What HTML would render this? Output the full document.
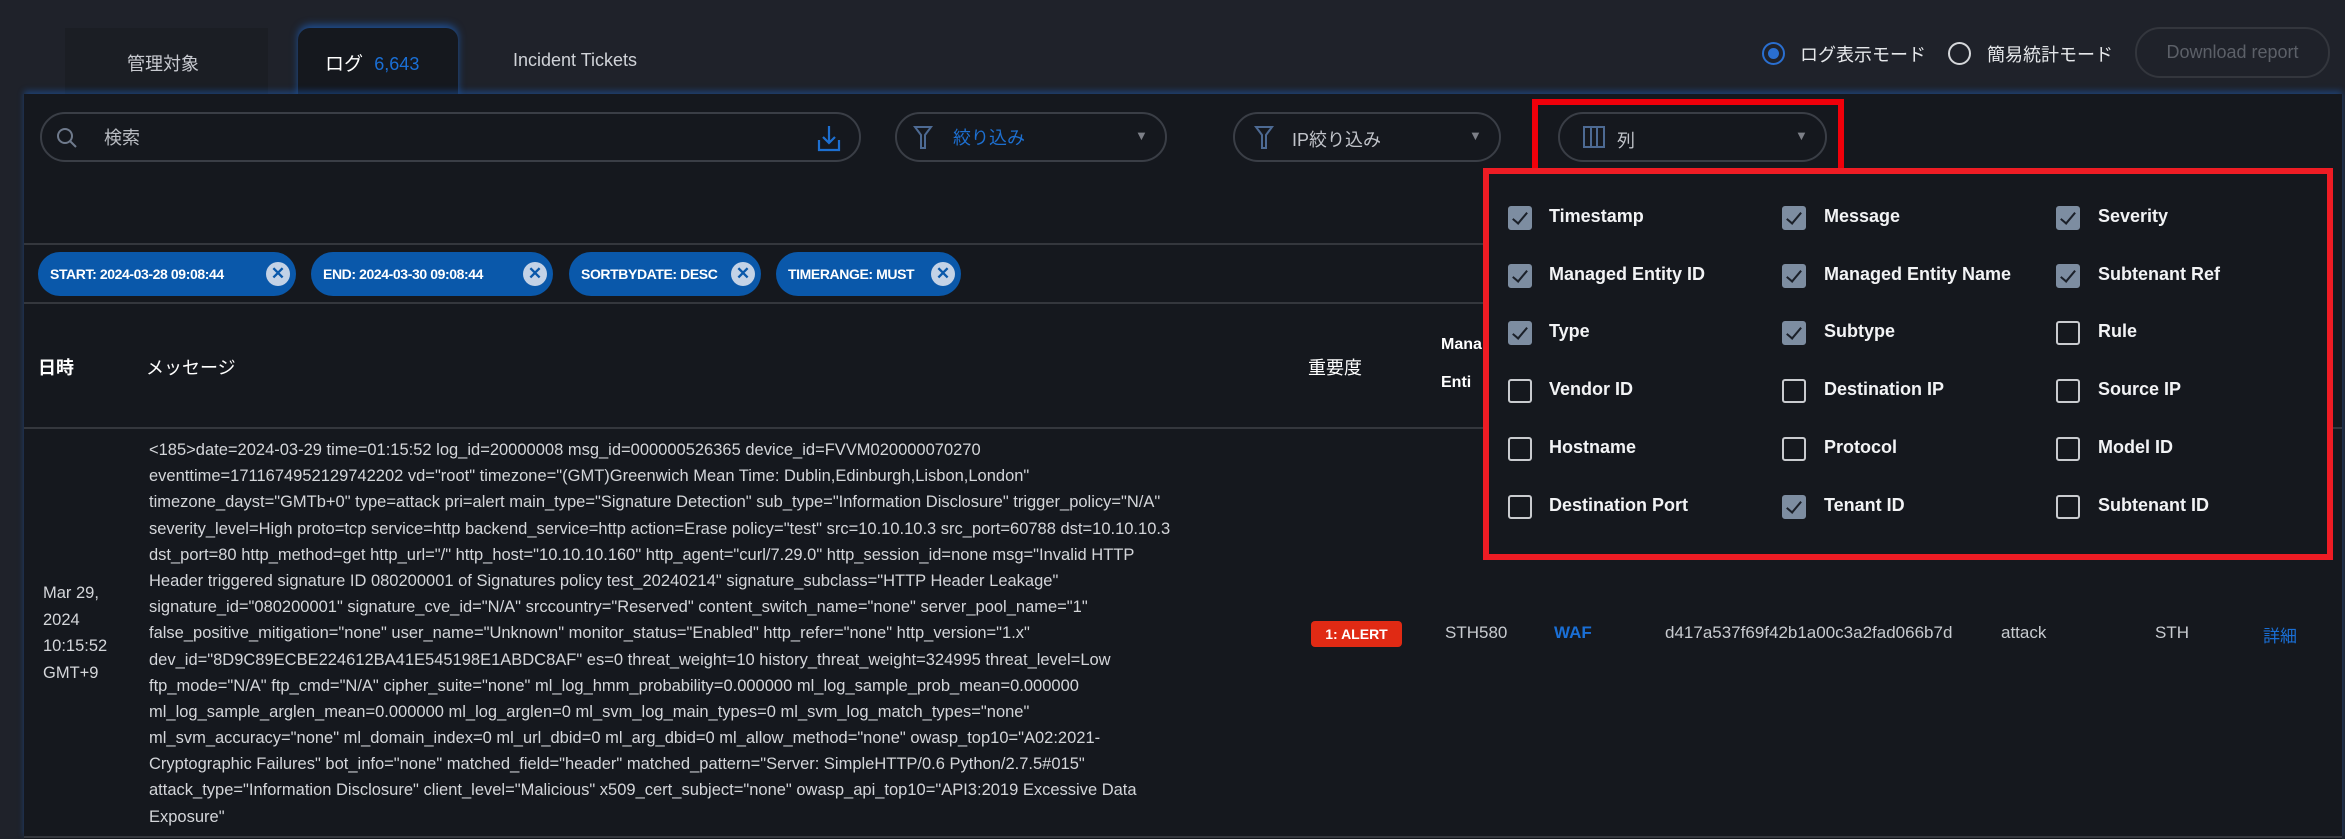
<!DOCTYPE html>
<html><head><meta charset="utf-8"><style>
*{margin:0;padding:0;box-sizing:border-box}
body{width:2345px;height:839px;background:#1f222a;font-family:"Liberation Sans","Noto Sans CJK JP",sans-serif;color:#d0d3d8;position:relative;overflow:hidden}
.a{position:absolute;white-space:nowrap}
.panel{position:absolute;left:24px;top:94px;width:2318px;height:745px;background:#15181e;box-shadow:0 -3px 6px rgba(30,110,220,.4)}
.box{position:absolute;border:2px solid #3a3e46;border-radius:26px;height:50px;top:112px}
.chip{position:absolute;top:252px;height:44px;border-radius:22px;background:#0a58aa;color:#fff;font-weight:bold;font-size:14px;letter-spacing:-0.4px;line-height:44px;padding-left:12px}
.chip i{position:absolute;right:6px;top:10px;width:24px;height:24px;border-radius:12px;background:#c3d2e6;color:#0a58aa;font-style:normal;text-align:center;line-height:24px;font-size:17px;letter-spacing:0}
.cb{position:absolute;width:24px;height:24px;border-radius:3px;border:2px solid #c9cbcf}
.cb.on{background:#7d8da1;border-color:#7d8da1}
.cb.on:after{content:"";position:absolute;left:6px;top:1px;width:6px;height:13px;border:solid #1b2029;border-width:0 2px 2px 0;transform:rotate(40deg)}
.lb{position:absolute;font-size:18px;font-weight:600;color:#f2f3f5;white-space:nowrap}
.msg div{height:26.2px;line-height:26.2px;font-size:16.5px;color:#d4d6da;white-space:nowrap}
</style></head><body>
<div class="a" style="left:65px;top:28px;width:203px;height:66px;background:#1b1e24"></div>
<div class="a" style="left:127px;top:50px;font-size:18px;color:#c8cad0">管理対象</div>
<div class="a" style="left:298px;top:28px;width:160px;height:70px;background:#15181e;border-radius:12px 12px 0 0;box-shadow:0 -3px 8px rgba(30,110,220,.6)"></div>
<div class="a" style="left:325px;top:49px;font-size:19px;color:#fff">ログ <span style="color:#1a6fd6;font-size:18px;margin-left:6px">6,643</span></div>
<div class="a" style="left:513px;top:50px;font-size:18px;color:#d0d3d8">Incident Tickets</div>
<div class="a" style="left:1762px;top:42px;width:23px;height:23px;border:2px solid #2a6fd0;border-radius:50%"><div style="margin:4px;width:11px;height:11px;border-radius:50%;background:#2a6fd0"></div></div>
<div class="a" style="left:1800px;top:41px;font-size:18px;color:#e6e8eb">ログ表示モード</div>
<div class="a" style="left:1948px;top:42px;width:23px;height:23px;border:2px solid #d5d7da;border-radius:50%"></div>
<div class="a" style="left:1987px;top:41px;font-size:18px;color:#e6e8eb">簡易統計モード</div>
<div class="a" style="left:2135px;top:27px;width:195px;height:51px;border:2px solid #33363d;border-radius:25px;color:#5c6068;font-size:18px;text-align:center;line-height:47px">Download report</div>
<div class="panel"></div>
<div class="box" style="left:40px;width:821px"></div>
<svg class="a" style="left:55px;top:126px" width="24" height="24" viewBox="0 0 24 24"><circle cx="10" cy="10" r="7" fill="none" stroke="#6f7a8c" stroke-width="2"/><path d="M15 15l6 6" stroke="#6f7a8c" stroke-width="2"/></svg>
<div class="a" style="left:104px;top:124px;font-size:18px;color:#b9bcc2">検索</div>
<svg class="a" style="left:816px;top:124px" width="26" height="28" viewBox="0 0 26 28"><path d="M13 2v17M7 13l6 6 6-6M3 16v10h20V16" fill="none" stroke="#1d6fd0" stroke-width="2.2"/></svg>
<div class="box" style="left:895px;width:272px"></div>
<svg class="a" style="left:913px;top:124px" width="20" height="26" viewBox="0 0 20 26"><path d="M2 3h16l-6 8v13h-4V11z" fill="none" stroke="#4d6a93" stroke-width="2"/></svg>
<div class="a" style="left:953px;top:124px;font-size:18px;color:#1d6fd0">絞り込み</div>
<div class="a" style="left:1135px;top:128px;font-size:13px;color:#7d8088">▼</div>
<div class="box" style="left:1233px;width:268px"></div>
<svg class="a" style="left:1254px;top:124px" width="20" height="26" viewBox="0 0 20 26"><path d="M2 3h16l-6 8v13h-4V11z" fill="none" stroke="#4d6a93" stroke-width="2"/></svg>
<div class="a" style="left:1292px;top:126px;font-size:18px;color:#c0c3c9">IP絞り込み</div>
<div class="a" style="left:1469px;top:128px;font-size:13px;color:#7d8088">▼</div>
<div class="box" style="left:1558px;width:269px"></div>
<svg class="a" style="left:1583px;top:126px" width="22" height="22" viewBox="0 0 22 22"><rect x="1" y="1" width="20" height="20" fill="none" stroke="#4d6a93" stroke-width="2"/><path d="M8 1v20M14 1v20" stroke="#4d6a93" stroke-width="2"/></svg>
<div class="a" style="left:1617px;top:127px;font-size:18px;color:#c0c3c9">列</div>
<div class="a" style="left:1795px;top:128px;font-size:13px;color:#7d8088">▼</div>
<div class="a" style="left:1532px;top:99px;width:312px;height:78px;border:6px solid #f0000a"></div>
<div class="a" style="left:24px;top:243px;width:1460px;height:2px;background:#34373d"></div>
<div class="a" style="left:24px;top:302px;width:1460px;height:2px;background:#34373d"></div>
<div class="chip" style="left:38px;width:258px">START: 2024-03-28 09:08:44<i>✕</i></div>
<div class="chip" style="left:311px;width:242px">END: 2024-03-30 09:08:44<i>✕</i></div>
<div class="chip" style="left:569px;width:192px">SORTBYDATE: DESC<i>✕</i></div>
<div class="chip" style="left:776px;width:185px">TIMERANGE: MUST<i>✕</i></div>
<div class="a" style="left:38px;top:354px;font-size:18px;color:#fff;font-weight:bold">日時</div>
<div class="a" style="left:146px;top:354px;font-size:18px;color:#fff">メッセージ</div>
<div class="a" style="left:1308px;top:354px;font-size:18px;color:#fff">重要度</div>
<div class="a" style="left:1441px;top:336px;font-size:16px;color:#fff;font-weight:600">Mana</div>
<div class="a" style="left:1441px;top:374px;font-size:16px;color:#fff;font-weight:600">Enti</div>
<div class="a" style="left:24px;top:427px;width:2318px;height:2px;background:#34373d"></div>
<div class="a" style="left:24px;top:836px;width:2318px;height:2px;background:#34373d"></div>
<div class="a" style="left:43px;top:580px;font-size:16.5px;line-height:26.5px;color:#d4d6da">Mar 29,<br>2024<br>10:15:52<br>GMT+9</div>
<div class="a msg" style="left:149px;top:437px">
<div>&lt;185&gt;date=2024-03-29 time=01:15:52 log_id=20000008 msg_id=000000526365 device_id=FVVM020000070270</div>
<div>eventtime=1711674952129742202 vd="root" timezone="(GMT)Greenwich Mean Time: Dublin,Edinburgh,Lisbon,London"</div>
<div>timezone_dayst="GMTb+0" type=attack pri=alert main_type="Signature Detection" sub_type="Information Disclosure" trigger_policy="N/A"</div>
<div>severity_level=High proto=tcp service=http backend_service=http action=Erase policy="test" src=10.10.10.3 src_port=60788 dst=10.10.10.3</div>
<div>dst_port=80 http_method=get http_url="/" http_host="10.10.10.160" http_agent="curl/7.29.0" http_session_id=none msg="Invalid HTTP</div>
<div>Header triggered signature ID 080200001 of Signatures policy test_20240214" signature_subclass="HTTP Header Leakage"</div>
<div>signature_id="080200001" signature_cve_id="N/A" srccountry="Reserved" content_switch_name="none" server_pool_name="1"</div>
<div>false_positive_mitigation="none" user_name="Unknown" monitor_status="Enabled" http_refer="none" http_version="1.x"</div>
<div>dev_id="8D9C89ECBE224612BA41E545198E1ABDC8AF" es=0 threat_weight=10 history_threat_weight=324995 threat_level=Low</div>
<div>ftp_mode="N/A" ftp_cmd="N/A" cipher_suite="none" ml_log_hmm_probability=0.000000 ml_log_sample_prob_mean=0.000000</div>
<div>ml_log_sample_arglen_mean=0.000000 ml_log_arglen=0 ml_svm_log_main_types=0 ml_svm_log_match_types="none"</div>
<div>ml_svm_accuracy="none" ml_domain_index=0 ml_url_dbid=0 ml_arg_dbid=0 ml_allow_method="none" owasp_top10="A02:2021-</div>
<div>Cryptographic Failures" bot_info="none" matched_field="header" matched_pattern="Server: SimpleHTTP/0.6 Python/2.7.5#015"</div>
<div>attack_type="Information Disclosure" client_level="Malicious" x509_cert_subject="none" owasp_api_top10="API3:2019 Excessive Data</div>
<div>Exposure"</div>
</div>
<div class="a" style="left:1311px;top:621px;width:91px;height:26px;background:#e02a14;border-radius:4px;color:#fff;font-weight:bold;font-size:14px;text-align:center;line-height:26px">1: ALERT</div>
<div class="a" style="left:1445px;top:623px;font-size:17px;color:#c8cbd0">STH580</div>
<div class="a" style="left:1554px;top:623px;font-size:17px;color:#1a6fd6;font-weight:bold">WAF</div>
<div class="a" style="left:1665px;top:623px;font-size:17px;color:#c8cbd0">d417a537f69f42b1a00c3a2fad066b7d</div>
<div class="a" style="left:2001px;top:623px;font-size:17px;color:#c8cbd0">attack</div>
<div class="a" style="left:2155px;top:623px;font-size:17px;color:#c8cbd0">STH</div>
<div class="a" style="left:2263px;top:622px;font-size:17px;color:#1a6fd6">詳細</div>
<div class="a" style="left:1483px;top:168px;width:850px;height:392px;background:#15181e;border:6px solid #ee1c24"></div>
<div class="cb on" style="left:1508px;top:206px"></div><div class="lb" style="left:1549px;top:206px">Timestamp</div>
<div class="cb on" style="left:1782px;top:206px"></div><div class="lb" style="left:1824px;top:206px">Message</div>
<div class="cb on" style="left:2056px;top:206px"></div><div class="lb" style="left:2098px;top:206px">Severity</div>
<div class="cb on" style="left:1508px;top:264px"></div><div class="lb" style="left:1549px;top:264px">Managed Entity ID</div>
<div class="cb on" style="left:1782px;top:264px"></div><div class="lb" style="left:1824px;top:264px">Managed Entity Name</div>
<div class="cb on" style="left:2056px;top:264px"></div><div class="lb" style="left:2098px;top:264px">Subtenant Ref</div>
<div class="cb on" style="left:1508px;top:321px"></div><div class="lb" style="left:1549px;top:321px">Type</div>
<div class="cb on" style="left:1782px;top:321px"></div><div class="lb" style="left:1824px;top:321px">Subtype</div>
<div class="cb" style="left:2056px;top:321px"></div><div class="lb" style="left:2098px;top:321px">Rule</div>
<div class="cb" style="left:1508px;top:379px"></div><div class="lb" style="left:1549px;top:379px">Vendor ID</div>
<div class="cb" style="left:1782px;top:379px"></div><div class="lb" style="left:1824px;top:379px">Destination IP</div>
<div class="cb" style="left:2056px;top:379px"></div><div class="lb" style="left:2098px;top:379px">Source IP</div>
<div class="cb" style="left:1508px;top:437px"></div><div class="lb" style="left:1549px;top:437px">Hostname</div>
<div class="cb" style="left:1782px;top:437px"></div><div class="lb" style="left:1824px;top:437px">Protocol</div>
<div class="cb" style="left:2056px;top:437px"></div><div class="lb" style="left:2098px;top:437px">Model ID</div>
<div class="cb" style="left:1508px;top:495px"></div><div class="lb" style="left:1549px;top:495px">Destination Port</div>
<div class="cb on" style="left:1782px;top:495px"></div><div class="lb" style="left:1824px;top:495px">Tenant ID</div>
<div class="cb" style="left:2056px;top:495px"></div><div class="lb" style="left:2098px;top:495px">Subtenant ID</div>
</body></html>
